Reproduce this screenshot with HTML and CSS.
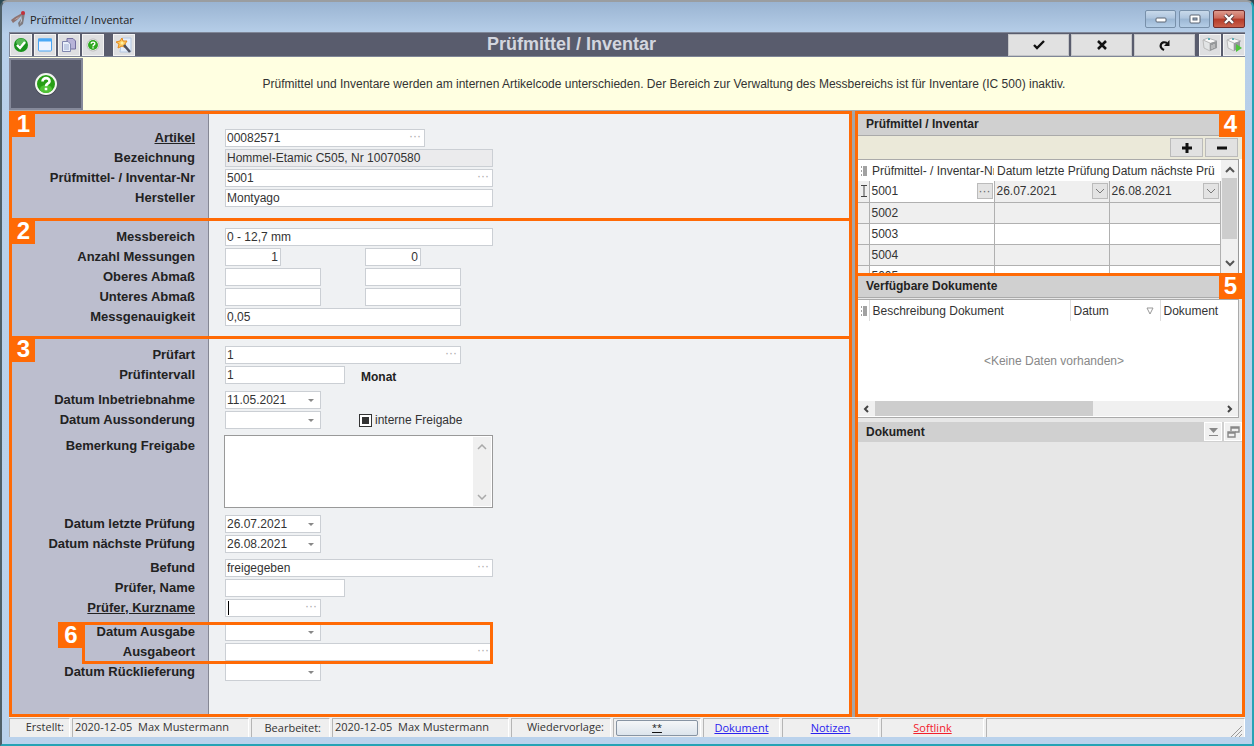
FILE: index.html
```html
<!DOCTYPE html>
<html lang="de">
<head>
<meta charset="utf-8">
<title>Prüfmittel / Inventar</title>
<link rel="stylesheet" href="styles.css">
</head>
<body>
<div class="window">
  <header class="titlebar">
    <svg class="app-icon" width="18" height="18" viewBox="0 0 18 18"><path d="M1 10 L5 7 L14 2 L12 5 L7 10 L3 13Z" fill="#8d7370"/><path d="M12 2 L15 3 L13 14 L9 17 L8 13 L11 9Z" fill="#7f7c80"/><path d="M4 10 L10 6 L7 9Z" fill="#d8b9b4"/><path d="M12 6 L12 11 L10 14Z" fill="#c4cad2"/><circle cx="13" cy="3" r="2" fill="#c3303a"/></svg>
    <span class="title-text">Prüfmittel / Inventar</span>
    <div class="win-buttons">
      <button class="win-btn" aria-label="Minimieren"><svg width="12" height="12" viewBox="0 0 12 12"><rect x="1" y="5" width="10" height="4" rx="1" fill="#fff" stroke="#5a6473"/></svg></button>
      <button class="win-btn" aria-label="Maximieren"><svg width="12" height="12" viewBox="0 0 12 12"><rect x="1" y="2" width="10" height="8" rx="1" fill="#fff" stroke="#5a6473"/><rect x="4" y="5" width="4" height="2" fill="#9fb4cc" stroke="#5a6473"/></svg></button>
      <button class="win-btn win-close" aria-label="Schließen"><svg width="12" height="12" viewBox="0 0 12 12"><path d="M2 2 L10 10 M10 2 L2 10" stroke="#5b3c40" stroke-width="4"/><path d="M2 2 L10 10 M10 2 L2 10" stroke="#fff" stroke-width="2.4"/></svg></button>
    </div>
  </header>

  <div class="toolbar">
    <div class="tools">
      <button class="tool" aria-label="OK"><svg width="16" height="16" viewBox="0 0 16 16"><circle cx="8" cy="8" r="7" fill="#18921c"/><ellipse cx="8" cy="5" rx="5" ry="3.500" fill="#56b956"/><path d="M4 8 L7 11 L12 5" fill="none" stroke="#fff" stroke-width="2.400"/></svg></button>
      <button class="tool" aria-label="Fenster"><svg width="16" height="16" viewBox="0 0 16 16"><rect x="1.500" y="2" width="13" height="12" rx="1" fill="#eef3ff" stroke="#49a5f2"/><rect x="1" y="1.500" width="14" height="3" fill="#4aa8f6"/></svg></button>
      <button class="tool" aria-label="Kopieren"><svg width="16" height="16" viewBox="0 0 16 16"><path d="M6 1.500H12L14.500 4V12H6Z" fill="#b7b3d8" stroke="#736e9f"/><path d="M1.500 4.500H7L9.500 7V14.500H1.500Z" fill="#e8effa" stroke="#7f86ae"/><path d="M3 8H8M3 10H8M3 12H8" stroke="#9dacd0"/></svg></button>
      <button class="tool" aria-label="Hilfe"><svg width="16" height="16" viewBox="0 0 16 16"><circle cx="8" cy="8" r="6" fill="#fff" stroke="#bcbcbc"/><circle cx="8" cy="8" r="5" fill="#2eaa20"/><path d="M6.200 6.800C6.200 4.500 10 4.500 9.800 6.800C9.600 8 8 7.800 8 9.400M8 10.200V11.600" fill="none" stroke="#fff" stroke-width="1.400"/></svg></button>
      <button class="tool tool-gap" aria-label="Assistent"><svg width="18" height="18" viewBox="0 0 18 18"><path d="M7 2H16V16H5Z" fill="#e4edfa" stroke="#b4c7e2"/><path d="M7 2 L8 5 L12 5 L10 8 L11 12 L7 10 L3 12 L4 8 L1 6 L5 5Z" fill="#fbc75c" stroke="#e58a1b"/><path d="M9 9 L15 16" stroke="#4d5161" stroke-width="2.600"/><circle cx="7" cy="7" r="1.500" fill="#fff0a0"/></svg></button>
    </div>
    <h1 class="form-title">Prüfmittel / Inventar</h1>
    <div class="actions">
      <button class="action" aria-label="Übernehmen"><svg width="14" height="14" viewBox="0 0 14 14"><path d="M2 7 L5 10 L12 3" fill="none" stroke="#111" stroke-width="2.400"/></svg></button>
      <button class="action" aria-label="Abbrechen"><svg width="14" height="14" viewBox="0 0 14 14"><path d="M3 3 L11 11 M11 3 L3 11" stroke="#111" stroke-width="2.500"/></svg></button>
      <button class="action" aria-label="Aktualisieren"><svg width="14" height="14" viewBox="0 0 14 14"><path d="M6 12 C0 9 3 2 9 5" fill="none" stroke="#111" stroke-width="2.200"/><path d="M11.500 2V8H6Z" fill="#111"/></svg></button>
      <button class="tool tool-gap-s" aria-label="Ablage"><svg width="16" height="16" viewBox="0 0 16 16"><path d="M1 3 L6 1 L15 4 L8 7Z" fill="#fafafa" stroke="#b5b8ba"/><path d="M1 3 L8 6 V14 L2 11Z" fill="#e2e4e5" stroke="#bbb"/><path d="M8 6 L15 4 V11 L8 14Z" fill="#96999b"/><path d="M10 8V12M12 7V11" stroke="#d9d9d9"/><rect x="6" y="1" width="2" height="2" fill="#62adb6"/></svg></button>
      <button class="tool" aria-label="Ablage starten"><svg width="16" height="16" viewBox="0 0 16 16"><path d="M1 3 L6 1 L15 4 L8 7Z" fill="#fafafa" stroke="#b5b8ba"/><path d="M1 3 L8 6 V14 L2 11Z" fill="#f0f1f1" stroke="#bbb"/><path d="M8 6 L14 4 V11 L8 14Z" fill="#96999b"/><rect x="6" y="1" width="2" height="2" fill="#62adb6"/><path d="M10 7 L16 11 L10 15Z" fill="#4fc43c"/></svg></button>
    </div>
  </div>

  <div class="info">
    <button class="help" aria-label="Hilfe"><svg width="24" height="24" viewBox="0 0 24 24"><circle cx="12" cy="13" r="11" fill="#3d404d"/><circle cx="12" cy="12" r="10" fill="#289e16" stroke="#f3f5f1" stroke-width="2"/><ellipse cx="12" cy="17" rx="6" ry="4" fill="#4fc334"/><path d="M8.500 9.500C8.500 5 15.800 5 15.500 9.500C15.200 11.500 12 11.500 12 14.300M12 15.800V18.300" fill="none" stroke="#fff" stroke-width="2.600"/></svg></button>
    <p class="info-text">Prüfmittel und Inventare werden am internen Artikelcode unterschieden. Der Bereich zur Verwaltung des Messbereichs ist für Inventare (IC 500) inaktiv.</p>
  </div>

  <main class="main">
    <form class="form">
      <section class="frame sec-1">
        <span class="badge">1</span>
        <div class="row"><label class="link-label" for="artikel">Artikel</label><div class="field w-200"><input id="artikel" value="00082571"><button type="button" class="more" aria-label="Artikel wählen">···</button></div></div>
        <div class="row"><label for="bez">Bezeichnung</label><div class="field w-268 readonly"><input id="bez" value="Hommel-Etamic C505, Nr 10070580" readonly></div></div>
        <div class="row"><label for="invnr">Prüfmittel- / Inventar-Nr</label><div class="field w-268"><input id="invnr" value="5001"><button type="button" class="more" aria-label="Nummer wählen">···</button></div></div>
        <div class="row"><label for="herst">Hersteller</label><div class="field w-268"><input id="herst" value="Montyago"></div></div>
      </section>

      <section class="frame sec-2">
        <span class="badge">2</span>
        <div class="row"><label for="mess">Messbereich</label><div class="field w-268"><input id="mess" value="0 - 12,7 mm"></div></div>
        <div class="row"><label for="anz">Anzahl Messungen</label><div class="pair"><div class="field w-56"><input id="anz" class="num" value="1"></div><div class="field w-56"><input class="num" value="0" aria-label="Anzahl Messungen 2"></div></div></div>
        <div class="row"><label for="ober">Oberes Abmaß</label><div class="pair"><div class="field w-96"><input id="ober"></div><div class="field w-96"><input aria-label="Oberes Abmaß 2"></div></div></div>
        <div class="row"><label for="unter">Unteres Abmaß</label><div class="pair"><div class="field w-96"><input id="unter"></div><div class="field w-96"><input aria-label="Unteres Abmaß 2"></div></div></div>
        <div class="row"><label for="genau">Messgenauigkeit</label><div class="field w-236"><input id="genau" value="0,05"></div></div>
      </section>

      <section class="frame sec-3">
        <span class="badge">3</span>
        <div class="group group-first">
          <div class="row"><label for="art">Prüfart</label><div class="field w-236"><input id="art" value="1"><button type="button" class="more" aria-label="Prüfart wählen">···</button></div></div>
          <div class="row"><label for="intervall">Prüfintervall</label><div class="trail"><div class="field w-120"><input id="intervall" value="1"></div><span class="unit">Monat</span></div></div>
        </div>
        <div class="group">
          <div class="row"><label for="inb">Datum Inbetriebnahme</label><div class="field w-96"><input id="inb" value="11.05.2021"><button type="button" class="drop" aria-label="Kalender"></button></div></div>
          <div class="row"><label for="aus">Datum Aussonderung</label><div class="pair"><div class="field w-96"><input id="aus"><button type="button" class="drop" aria-label="Kalender"></button></div><label class="check"><input type="checkbox">interne Freigabe</label></div></div>
        </div>
        <div class="row row-memo"><label for="bem">Bemerkung Freigabe</label><div class="memo"><textarea id="bem"></textarea><div class="memo-bar"><svg width="10" height="6" viewBox="0 0 10 6"><path d="M1 5 L5 1 L9 5" fill="none" stroke="#aaa" stroke-width="1.500"/></svg><svg width="10" height="6" viewBox="0 0 10 6"><path d="M1 1 L5 5 L9 1" fill="none" stroke="#aaa" stroke-width="1.500"/></svg></div></div></div>
        <div class="group">
          <div class="row"><label for="letzte">Datum letzte Prüfung</label><div class="field w-96"><input id="letzte" value="26.07.2021"><button type="button" class="drop" aria-label="Kalender"></button></div></div>
          <div class="row"><label for="next">Datum nächste Prüfung</label><div class="field w-96"><input id="next" value="26.08.2021"><button type="button" class="drop" aria-label="Kalender"></button></div></div>
        </div>
        <div class="group">
          <div class="row"><label for="befund">Befund</label><div class="field w-268"><input id="befund" value="freigegeben"><button type="button" class="more" aria-label="Befund wählen">···</button></div></div>
          <div class="row"><label for="pname">Prüfer, Name</label><div class="field w-120"><input id="pname"></div></div>
          <div class="row"><label class="link-label" for="pkurz">Prüfer, Kurzname</label><div class="field w-96"><span class="caret"></span><input id="pkurz"><button type="button" class="more" aria-label="Prüfer wählen">···</button></div></div>
        </div>
        <div class="group">
          <div class="marked">
            <div class="row"><label for="ausg">Datum Ausgabe</label><div class="field w-96"><input id="ausg"><button type="button" class="drop" aria-label="Kalender"></button></div></div>
            <div class="row"><label for="ort">Ausgabeort</label><div class="field w-268"><input id="ort"><button type="button" class="more" aria-label="Ort wählen">···</button></div></div>
            <div class="mark-frame"></div><span class="badge badge-6">6</span>
          </div>
          <div class="row"><label for="rueck">Datum Rücklieferung</label><div class="field w-96"><input id="rueck"><button type="button" class="drop" aria-label="Kalender"></button></div></div>
        </div>
      </section>
    </form>

    <aside class="side">
      <section class="frame panel-4">
        <span class="badge badge-right">4</span>
        <h2 class="panel-head">Prüfmittel / Inventar</h2>
        <div class="panel-tools">
          <button class="small-btn" aria-label="Hinzufügen"><svg width="10" height="10" viewBox="0 0 10 10"><path d="M5 0V10M0 5H10" stroke="#111" stroke-width="3"/></svg></button>
          <button class="small-btn" aria-label="Entfernen"><svg width="10" height="10" viewBox="0 0 10 10"><path d="M0 5H10" stroke="#111" stroke-width="3"/></svg></button>
        </div>
        <div class="grid-wrap">
          <div class="grid-view">
          <table class="grid">
            <colgroup><col class="c-ind"><col class="c-nr"><col class="c-last"><col></colgroup>
            <thead><tr><th><svg width="6" height="10" viewBox="0 0 6 10"><path d="M2 1H6M2 3H6M2 5H6M2 7H6M2 9H6" stroke="#444"/><path d="M0 1H1M0 5H1M0 9H1" stroke="#444"/></svg></th><th>Prüfmittel- / Inventar-Nr</th><th>Datum letzte Prüfung</th><th>Datum nächste Prü</th></tr></thead>
            <tbody>
              <tr class="current"><td><svg width="6" height="12" viewBox="0 0 6 12"><path d="M0 .5H6M0 11.500H6M3 0V12" stroke="#444" fill="none"/></svg></td><td class="edit"><div class="cell">5001<button class="cell-btn" aria-label="Auswählen">···</button></div></td><td><div class="cell">26.07.2021<button class="cell-btn" aria-label="Kalender"><svg width="8" height="6" viewBox="0 0 8 6"><path d="M0 1 L4 5 L8 1" fill="none" stroke="#777"/></svg></button></div></td><td><div class="cell">26.08.2021<button class="cell-btn" aria-label="Kalender"><svg width="8" height="6" viewBox="0 0 8 6"><path d="M0 1 L4 5 L8 1" fill="none" stroke="#777"/></svg></button></div></td></tr>
              <tr class="alt"><td></td><td>5002</td><td></td><td></td></tr>
              <tr><td></td><td>5003</td><td></td><td></td></tr>
              <tr class="alt"><td></td><td>5004</td><td></td><td></td></tr>
              <tr><td></td><td>5005</td><td></td><td></td></tr>
            </tbody>
          </table>
          </div>
          <div class="vbar"><svg width="10" height="7" viewBox="0 0 10 7"><path d="M1 6 L5 2 L9 6" fill="none" stroke="#555" stroke-width="2"/></svg><div class="vthumb"></div><svg width="10" height="7" viewBox="0 0 10 7"><path d="M1 1 L5 5 L9 1" fill="none" stroke="#555" stroke-width="2"/></svg></div>
        </div>
      </section>

      <section class="frame panel-5">
        <span class="badge badge-right">5</span>
        <h2 class="panel-head">Verfügbare Dokumente</h2>
        <div class="docs">
          <table class="doc-grid">
            <colgroup><col class="c-ind"><col class="c-desc"><col class="c-date"><col></colgroup>
            <thead><tr><th><svg width="6" height="10" viewBox="0 0 6 10"><path d="M2 1H6M2 3H6M2 5H6M2 7H6M2 9H6" stroke="#444"/><path d="M0 1H1M0 5H1M0 9H1" stroke="#444"/></svg></th><th>Beschreibung Dokument</th><th><div class="sort">Datum<svg width="8" height="8" viewBox="0 0 8 8"><path d="M1 1H7L4 7Z" fill="none" stroke="#999"/></svg></div></th><th>Dokument</th></tr></thead>
          </table>
          <p class="empty">&lt;Keine Daten vorhanden&gt;</p>
          <div class="hbar"><svg width="7" height="8" viewBox="0 0 7 8"><path d="M5 1 L2 4 L5 7" fill="none" stroke="#444" stroke-width="2"/></svg><div class="htrack"><div class="hthumb"></div></div><svg width="7" height="8" viewBox="0 0 7 8"><path d="M2 1 L5 4 L2 7" fill="none" stroke="#444" stroke-width="2"/></svg></div>
        </div>
        <div class="doc-head">
          <h2 class="panel-head">Dokument</h2>
          <button class="mini" aria-label="Einklappen"><svg width="11" height="10" viewBox="0 0 11 10"><path d="M1 1H10L5.500 6Z" fill="#888"/><path d="M1 8.500H10" stroke="#888"/></svg></button>
          <button class="mini" aria-label="Abdocken"><svg width="13" height="12" viewBox="0 0 13 12"><path d="M4 5V1H12V6H8M4 2H12" fill="none" stroke="#888" stroke-width="1.400"/><path d="M1 6H8V11H1ZM1 7H8" fill="none" stroke="#888" stroke-width="1.400"/></svg></button>
        </div>
        <div class="preview"></div>
      </section>
    </aside>
  </main>

  <footer class="status">
    <div class="st st-a">Erstellt:</div>
    <div class="st st-user">2020-12-05&nbsp; Max Mustermann</div>
    <div class="st st-b">Bearbeitet:</div>
    <div class="st st-user">2020-12-05&nbsp; Max Mustermann</div>
    <div class="st st-c">Wiedervorlage:</div>
    <div class="st st-d"><button class="stars">**</button></div>
    <div class="st st-e"><a href="#dokument">Dokument</a></div>
    <div class="st st-f"><a href="#notizen">Notizen</a></div>
    <div class="st st-g"><a class="red" href="#softlink">Softlink</a></div>
    <div class="st st-rest"><svg width="12" height="12" viewBox="0 0 12 12"><path d="M1 12 L12 1M5 12 L12 5M9 12 L12 9" stroke="#999"/></svg></div>
  </footer>
</div>
</body>
</html>
```
FILE: styles.css
```css
* { box-sizing: border-box; }
body {
  margin: 0;
  background: #2b4a55;
  color: #333;
  font: 12px/16px "Liberation Sans", Arial, sans-serif;
}
button, input, textarea { font: inherit; color: inherit; margin: 0; padding: 0; border: 0; background: none; border-radius: 0; }
button { display: flex; align-items: center; justify-content: center; }
h1, h2, p { margin: 0; }
svg { display: block; flex: none; }

.window {
  min-height: 100vh;
  display: flex;
  flex-direction: column;
  padding: 0 7px 7px;
  border: 2px solid #4f6068;
  border-top-color: #9a9da0;
  border-right-color: #26a3b5;
  border-bottom-color: #26a3b5;
  border-radius: 7px 7px 0 0;
  background: linear-gradient(#9ab4d2, #b7cfe9 32px, #bad2ec);
}
.titlebar { display: flex; align-items: center; height: 30px; }
.app-icon { margin: 3px 2px 0 1px; }
.title-text { flex: 1; padding-top: 6px; font: 11px/16px "Open Sans", sans-serif; color: #222; }
.win-buttons { display: flex; gap: 3px; padding-top: 3px; }
.win-btn { width: 31px; height: 18px; border: 1px solid #7890aa; border-radius: 2px; background: linear-gradient(#c8d9ea, #aec5de 45%, #9bb6d3 50%, #b4cde6); }
.win-close { width: 32px; border-color: #6f2b2b; background: linear-gradient(#dd9a8d, #cb6a5b 45%, #b53a28 50%, #c9604c); }

.toolbar { display: flex; align-items: center; height: 25px; background: #595c6d; border: 1px solid #7f8697; border-right: 0; }
.tools, .actions { display: flex; gap: 2px; }
.tool { width: 22px; height: 22px; background: #dedfe1; border: 1px solid #f3f3f3; }
.tool-gap { margin-left: 7px; }
.tool-gap-s { margin-left: 2px; }
.action { width: 61px; height: 22px; background: #e1e1e1; border: 1px solid #c4c5c8; }
.form-title { flex: 1; text-align: center; font-size: 18px; line-height: 23px; color: #d3d6df; }

.info { display: flex; height: 54px; background: #ffffe1; border-bottom: 1px solid #aaa; }
.help { width: 74px; margin-top: 1px; background: #595c6d; border: 2px solid #85899a; }
.info-text { flex: 1; align-self: center; text-align: center; }

.main { flex: 1; display: flex; gap: 3px; background: #a5a5a5; }
.form { flex: 1; display: flex; flex-direction: column; }
.side { width: 390px; display: flex; flex-direction: column; }
.frame { position: relative; border: 3px solid #ff6a05; }
.badge { position: absolute; top: 0; left: 0; width: 23px; height: 23px; background: #ff6a05; color: #fff; text-align: center; font: bold 24px/20px "Liberation Sans", Arial, sans-serif; }
.badge-right { left: auto; right: 0; }
.badge-6 { top: -1px; left: 46px; width: 26px; height: 26px; line-height: 26px; }

.form .frame {
  display: flex;
  flex-direction: column;
  gap: 2px;
  background: linear-gradient(90deg, #bcbece 196px, #858794 196px, #858794 197px, #eff1f3 197px);
}
.form .sec-1 { padding: 15px 0 11px; border-bottom: 0; }
.form .sec-2 { padding: 7px 0 10px; border-bottom: 0; }
.form .sec-3 { flex: 1; padding-top: 7px; gap: 6px; }
.group, .marked { display: flex; flex-direction: column; gap: 2px; }
.group-first { margin-bottom: 1px; }
.marked { position: relative; }
.mark-frame { position: absolute; top: -1px; bottom: -3px; left: 70px; width: 411px; border: 3px solid #ff6a05; pointer-events: none; }
.row { display: grid; grid-template-columns: 183px 1fr; column-gap: 30px; min-height: 18px; }
.row > label { text-align: right; font-weight: bold; font-size: 13px; line-height: 17px; color: #222; }
.row > .link-label { text-decoration: underline; }
.field { display: flex; height: 18px; background: #fff; border: 1px solid #cbcfd4; }
.field input { flex: 1; min-width: 0; padding-left: 1px; outline: none; }
.field .num { text-align: right; padding-right: 2px; }
.readonly { background: #ebebed; }
.w-56 { width: 56px; }
.w-96 { width: 96px; }
.w-120 { width: 120px; }
.w-200 { width: 200px; }
.w-236 { width: 236px; }
.w-268 { width: 268px; }
.more { width: 18px; line-height: 12px; align-items: flex-start; color: #aaa; }
.drop { width: 18px; }
.drop::after { content: ""; border: 3px solid transparent; border-top-color: #888; border-bottom: 0; }
.pair { display: grid; grid-template-columns: 140px 1fr; }
.trail { display: flex; height: 18px; }
.unit { margin-left: 16px; line-height: 22px; font-weight: bold; color: #222; }
.check { display: flex; align-items: center; gap: 3px; margin-left: -6px; }
.check input { appearance: none; width: 13px; height: 13px; border: 1px solid #333; background: #333; box-shadow: inset 0 0 0 2px #fff; }
.row-memo { margin-bottom: 1px; }
.row-memo > label { padding-top: 2px; }
.memo { display: flex; width: 269px; height: 73px; margin-left: -1px; border: 1px solid #999; background: #fff; }
.memo textarea { flex: 1; resize: none; outline: none; }
.memo-bar { display: flex; flex-direction: column; justify-content: space-between; align-items: center; width: 18px; padding: 7px 0 6px; margin: 1px; background: #f0f0f0; }
.caret { width: 1px; margin: 1px 0 1px 2px; background: #000; }

.panel-4 { height: 162px; display: flex; flex-direction: column; border-bottom: 0; background: #fff; }
.panel-head { height: 22px; padding-left: 8px; background: #d0d0d0; border-bottom: 1px solid #aaa; font-size: 12px; line-height: 20px; color: #222; }
.panel-tools { display: flex; justify-content: flex-end; align-items: center; gap: 2px; height: 23px; padding-right: 4px; background: #ebe9d9; }
.small-btn { width: 33px; height: 19px; background: #e1e1e1; border: 1px solid #bbb; }
.grid-wrap { flex: 1; display: flex; min-height: 0; margin-right: 3px; overflow: hidden; border-top: 1px solid #aaa; border-right: 1px solid #999; }
.grid-view { flex: 1; min-width: 0; overflow: hidden; }
.grid, .doc-grid { width: 100%; table-layout: fixed; border-collapse: collapse; }
.c-ind { width: 11px; }
.c-nr { width: 125px; }
.c-last { width: 115px; }
.c-desc { width: 201px; }
.c-date { width: 90px; }
th, td { height: 21px; padding: 0 2px; overflow: hidden; white-space: nowrap; text-align: left; font-weight: normal; }
th { padding: 0 2px 0 3px; }
th:first-child, td:first-child { padding: 0 1px 0 3px; }
td { border: 1px solid #b0b0b0; }
td:first-child { background: #f2f2f2; border-left: 0; }
.current td { border-top: 0; background: #efefef; padding-right: 1px; }
.current .edit { background: #fff; }
.alt td { background: #efefef; }
.cell { display: flex; justify-content: space-between; align-items: center; }
.cell-btn { width: 16px; height: 16px; border: 1px solid #bbb; background: #e3e3e3; color: #666; }
.vbar { width: 17px; display: flex; flex-direction: column; align-items: center; padding: 6px 0; background: #f0f0f0; }
.vthumb { width: 15px; height: 61px; margin: 5px 0 auto; background: #cdcdcd; }

.panel-5 { flex: 1; display: flex; flex-direction: column; background: #e7e7e7; }
.docs { height: 119px; margin: 1px 3px 0 0; display: flex; flex-direction: column; border: 1px solid #aaa; border-left: 0; background: #fff; }
.doc-grid th { border-right: 1px solid #ddd; }
.doc-grid th:last-child { border-right: 0; }
.sort { display: flex; justify-content: space-between; align-items: center; padding-right: 4px; }
.empty { flex: 1; display: flex; align-items: center; justify-content: center; padding-left: 12px; color: #888; }
.hbar { display: flex; align-items: center; gap: 5px; height: 15px; padding: 0 5px; margin-bottom: 1px; background: #f0f0f0; }
.htrack { flex: 1; height: 15px; }
.hthumb { width: 63%; height: 15px; background: #cdcdcd; }
.doc-head { display: flex; gap: 2px; margin-top: 4px; background: #d0d0d0; }
.doc-head .panel-head { flex: 1; height: 20px; border: 0; }
.mini { width: 18px; height: 19px; background: #f0f0f0; border: 1px solid #fff; }
.preview { flex: 1; margin-right: 1px; }

.status { display: flex; gap: 2px; height: 20px; padding-top: 1px; background: #efefef; font: 11px/16px "Open Sans", sans-serif; white-space: nowrap; }
.st { border: 1px solid #b5b5b5; border-right-color: #fff; border-bottom: 0; padding: 0 2px; }
.st-a { width: 61px; text-align: right; padding-right: 5px; }
.st-user { width: 177px; }
.st-b { width: 79px; padding: 1px 8px 0 0; text-align: right; }
.st-c { width: 100px; text-align: right; padding-right: 6px; }
.st-d { width: 88px; }
.stars { width: 100%; height: 16px; margin-top: 1px; border: 1px solid #8794a3; border-radius: 2px; background: linear-gradient(#f4f6f8, #dce4ec); font-size: 9px; text-decoration: underline; color: #111; }
.st-e, .st-f, .st-g { padding-top: 1px; text-align: center; }
.st-e { width: 77px; }
.st-f { width: 97px; }
.st-g { width: 103px; }
.st-rest { flex: 1; display: flex; justify-content: flex-end; align-items: flex-end; }
a { color: #2a22ee; }
.red { color: #f2202b; }
```
